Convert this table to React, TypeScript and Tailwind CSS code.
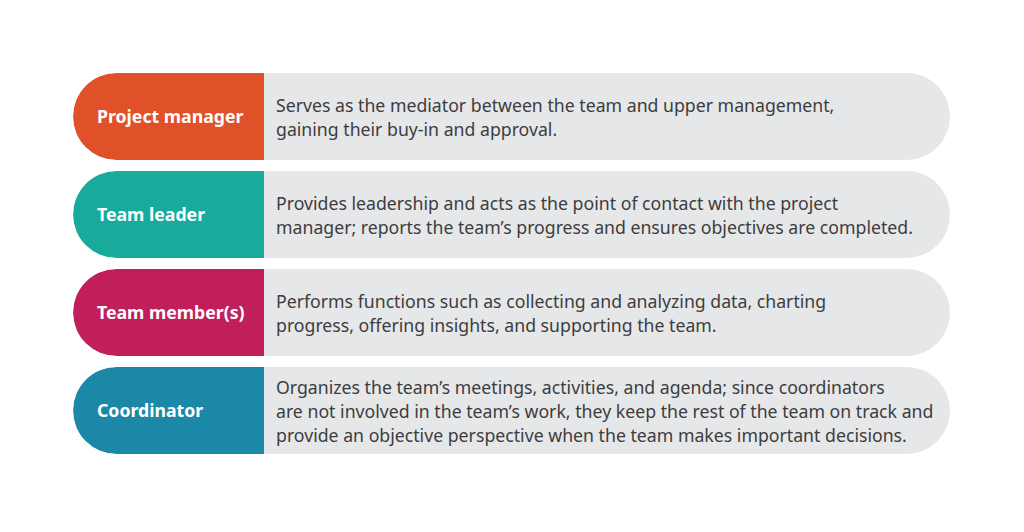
const roles = [
  {
    title: "Project manager",
    color: "bg-[#e0512a]",
    text: ["Serves as the mediator between the team and upper management,", "gaining their buy-in and approval."],
  },
  {
    title: "Team leader",
    color: "bg-[#18ab9b]",
    text: [
      "Provides leadership and acts as the point of contact with the project",
      "manager; reports the team\u2019s progress and ensures objectives are completed.",
    ],
  },
  {
    title: "Team member(s)",
    color: "bg-[#c11f5b]",
    text: ["Performs functions such as collecting and analyzing data, charting", "progress, offering insights, and supporting the team."],
  },
  {
    title: "Coordinator",
    color: "bg-[#1c88a8]",
    text: [
      "Organizes the team\u2019s meetings, activities, and agenda; since coordinators",
      "are not involved in the team\u2019s work, they keep the rest of the team on track and",
      "provide an objective perspective when the team makes important decisions.",
    ],
  },
];

export default function App() {
  return (
    <div className="w-[1024px] h-[532px] bg-white pt-[73px] pl-[73px] font-['Noto_Sans',sans-serif]">
      <div className="flex flex-col gap-[11px] w-[877px]">
        {roles.map((r) => (
          <div key={r.title} className="flex h-[87px] rounded-full bg-[#e6e7e8] overflow-hidden">
            <div className={`${r.color} w-[191px] shrink-0 rounded-l-full flex items-center pl-[24px]`}>
              <span className="text-white font-bold text-[17.7px]">{r.title}</span>
            </div>
            <div className="flex flex-col justify-center pl-[12px] text-[#3d3d3f] text-[17.7px] leading-[24px]">
              {r.text.map((t) => (
                <div key={t} className="whitespace-nowrap">{t}</div>
              ))}
            </div>
          </div>
        ))}
      </div>
    </div>
  );
}
